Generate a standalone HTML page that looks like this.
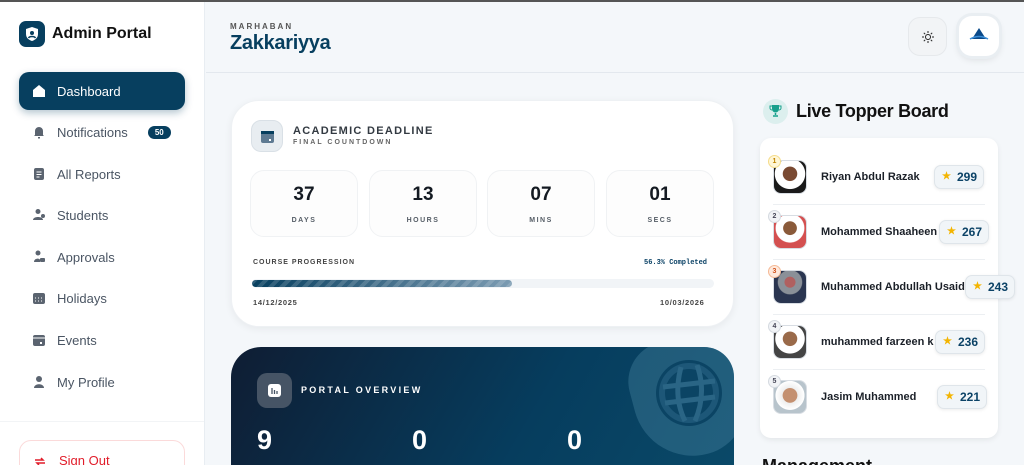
<!DOCTYPE html>
<html><head><meta charset="utf-8"><style>
*{box-sizing:border-box;margin:0;padding:0}
html,body{width:1024px;height:465px;overflow:hidden}
body{font-family:"Liberation Sans",sans-serif;background:#f4f7fa;position:relative}
.abs{position:absolute}
.top{left:0;top:0;width:1024px;height:2px;background:#555}
.side{left:0;top:2px;width:205px;height:463px;background:#fff;border-right:1px solid #e8edf2;overflow:hidden}
.nav{position:absolute;left:19px;width:166px;height:38px;display:flex;align-items:center;padding-left:38px;font-size:13px;color:#4a5563}
.nav svg{position:absolute;left:13px;top:12px}
.hdr{left:206px;top:2px;width:818px;height:71px;border-bottom:1px solid #e3e8ee}
.card{background:#fff;border-radius:28px;box-shadow:0 2px 8px rgba(0,0,0,.06);border:1px solid #eef1f4}
.cd{position:absolute;top:170px;width:108px;height:67px;border:1px solid #f0f2f4;border-radius:14px;background:#fdfdfd;text-align:center}
.cd b{display:block;font-size:19px;color:#141a22;margin-top:13px;font-weight:900}
.cd span{display:block;font-size:7px;letter-spacing:1.5px;color:#555d66;font-weight:bold;margin-top:11px}
.row{position:absolute;left:13px;width:212px;height:55px}
.av{position:absolute;left:0;top:10px;width:34px;height:34px;border-radius:8px;border:1px solid #d8dde3;overflow:hidden}
.rk{position:absolute;left:-5px;top:5px;width:13px;height:13px;border-radius:50%;font-size:7px;font-weight:bold;text-align:center;line-height:11px;background:#f1f3f6;border:1px solid #d5dae0;color:#445}
.nm{position:absolute;left:48px;top:21px;font-size:11px;font-weight:bold;color:#1b2028;white-space:nowrap}
.bd{position:absolute;top:15px;height:24px;width:50px;border-radius:7px;background:#f1f5f8;border:1px solid #dfe5ea;box-shadow:0 1px 3px rgba(0,0,0,.08);font-size:12px;font-weight:900;color:#0b4266;line-height:22px;padding-left:22px}
.bd:before{content:"★";position:absolute;left:7px;color:#f3b400;font-size:10px}
.sep{position:absolute;left:0;right:0;bottom:0;height:1px;background:#eceff2}
</style></head><body>
<div class="abs top"></div>
<div class="abs side">
 <div class="abs" style="left:19px;top:19px;width:26px;height:26px;border-radius:7px;background:#073f5f"><svg width="26" height="26" viewBox="0 0 26 26"><path d="M13 6l6 2v5c0 4-3 6-6 7c-3-1-6-3-6-7V8z" fill="#fff"/><circle cx="13" cy="12" r="2" fill="#073f5f"/><path d="M9.5 17c1-2 6-2 7 0" stroke="#073f5f" stroke-width="1.6" fill="none"/></svg></div>
 <div class="abs" style="left:52px;top:23px;font-size:16px;font-weight:bold;color:#111">Admin Portal</div>
 <div class="nav" style="top:70px;background:#073f5f;color:#fff;border-radius:10px;box-shadow:0 3px 8px rgba(7,63,95,.3)"><svg width="14" height="14"><path d="M1 6L7 1l6 5v7H1z" fill="#fff"/></svg>Dashboard</div>
 <div class="nav" style="top:111px"><svg width="14" height="14"><path d="M3 10V6a4 4 0 018 0v4l1 1H2z M6 12h2v1.5H6z" fill="#5b6470"/></svg>Notifications<span style="margin-left:20px;background:#073f5f;color:#fff;font-size:8px;font-weight:bold;border-radius:8px;padding:2px 7px">50</span></div>
 <div class="nav" style="top:153px"><svg width="14" height="14"><rect x="2" y="1" width="10" height="12" rx="2" fill="#5b6470"/><path d="M4.5 5h5M4.5 7.5h5M4.5 10h3" stroke="#fff" stroke-width="1"/></svg>All Reports</div>
 <div class="nav" style="top:194px"><svg width="14" height="14"><circle cx="6" cy="3.5" r="2.5" fill="#5b6470"/><path d="M1 12c0-4 10-4 10 0z" fill="#5b6470"/><circle cx="11" cy="8" r="2" fill="#5b6470"/></svg>Students</div>
 <div class="nav" style="top:236px"><svg width="14" height="14"><circle cx="6" cy="3" r="2.5" fill="#5b6470"/><path d="M2 12c0-4 6-4 6-2v2z" fill="#5b6470"/><rect x="8" y="8" width="5" height="4" rx="1" fill="#5b6470"/></svg>Approvals</div>
 <div class="nav" style="top:277px"><svg width="14" height="14"><rect x="1" y="2" width="12" height="11" rx="2" fill="#5b6470"/><path d="M3 7h1M6 7h1M9 7h1M3 10h1M6 10h1M9 10h1" stroke="#fff"/></svg>Holidays</div>
 <div class="nav" style="top:319px"><svg width="14" height="14"><rect x="1" y="2" width="12" height="11" rx="2" fill="#5b6470"/><path d="M1 5h12" stroke="#fff"/><rect x="8" y="9" width="2" height="2" fill="#fff"/></svg>Events</div>
 <div class="nav" style="top:361px"><svg width="14" height="14"><circle cx="7" cy="4" r="3" fill="#5b6470"/><path d="M2 13c0-5 10-5 10 0z" fill="#5b6470"/></svg>My Profile</div>
 <div class="abs" style="left:0;top:419px;width:204px;height:1px;background:#f2f4f6"></div>
 <div class="abs" style="left:19px;top:438px;width:166px;height:40px;border:1px solid #fbdada;border-radius:12px;color:#e11d2a;font-size:13px;padding:12px 0 0 39px"><svg class="abs" style="left:14px;top:15px" width="12" height="10"><path d="M1 4h8l-2-2M11 7H3l2 2" stroke="#e11d2a" stroke-width="1.5" fill="none"/></svg>Sign Out</div>
</div>
<div class="abs hdr">
 <div class="abs" style="left:24px;top:20px;font-size:8px;letter-spacing:2px;color:#555;font-weight:bold">MARHABAN</div>
 <div class="abs" style="left:24px;top:30px;font-size:20px;font-weight:900;color:#073f5f;letter-spacing:-.3px">Zakkariyya</div>
 <div class="abs" style="left:702px;top:15px;width:39px;height:39px;border-radius:12px;background:#f2f4f6;border:1px solid #e6e9ec"><svg class="abs" style="left:12px;top:12px" width="14" height="14"><circle cx="7" cy="7" r="2.5" stroke="#222" fill="none"/><path d="M7 1v2M7 11v2M1 7h2M11 7h2M2.8 2.8l1.4 1.4M9.8 9.8l1.4 1.4M2.8 11.2l1.4-1.4M9.8 4.2l1.4-1.4" stroke="#222"/></svg></div>
 <div class="abs" style="left:753px;top:14px;width:40px;height:40px;border-radius:13px;background:#fff;box-shadow:0 0 0 3px #e9eef2,0 3px 8px rgba(0,0,0,.12)"><svg class="abs" style="left:10px;top:11px" width="20" height="16"><path d="M10 1L3 12h14z" fill="#0a4a8a"/><path d="M1 12q9-5 18 0" stroke="#3b8ed8" stroke-width="1.5" fill="none"/></svg></div>
</div>
<div class="abs card" style="left:231px;top:100px;width:503px;height:227px">
 <div class="abs" style="left:19px;top:19px;width:32px;height:32px;border-radius:10px;background:#e8edf1;border:1px solid #d9e0e6"><svg class="abs" style="left:8px;top:8px" width="15" height="15"><rect x="1" y="2" width="13" height="12" rx="2" fill="#5e7a92"/><rect x="1" y="2" width="13" height="3" fill="#073f5f"/><rect x="9" y="10" width="2" height="2" fill="#fff"/></svg></div>
 <div class="abs" style="left:61px;top:24px;font-size:11px;font-weight:900;letter-spacing:1.3px;color:#333a42">ACADEMIC DEADLINE</div>
 <div class="abs" style="left:61px;top:38px;font-size:7px;font-weight:bold;letter-spacing:2px;color:#666">FINAL COUNTDOWN</div>
</div>
<div class="cd" style="left:250px"><b>37</b><span>DAYS</span></div>
<div class="cd" style="left:369px"><b>13</b><span>HOURS</span></div>
<div class="cd" style="left:487px"><b>07</b><span>MINS</span></div>
<div class="cd" style="left:606px"><b>01</b><span>SECS</span></div>
<div class="abs" style="left:253px;top:259px;font-size:7px;font-weight:bold;letter-spacing:1px;color:#444">COURSE PROGRESSION</div>
<div class="abs" style="left:644px;top:259px;font-size:7px;font-weight:bold;color:#0b4266;font-family:'Liberation Mono',monospace">56.3% Completed</div>
<div class="abs" style="left:252px;top:279px;width:462px;height:9px;border-radius:5px;background:#f1f4f7"></div>
<div class="abs" style="left:252px;top:280px;width:260px;height:7px;border-radius:4px;background:repeating-linear-gradient(135deg,rgba(255,255,255,.15) 0 4px,transparent 4px 8px),linear-gradient(90deg,#073f5f,#7b9bb2)"></div>
<div class="abs" style="left:253px;top:298px;font-size:7.5px;font-weight:bold;letter-spacing:.7px;color:#444">14/12/2025</div>
<div class="abs" style="left:660px;top:298px;font-size:7.5px;font-weight:bold;letter-spacing:.7px;color:#444">10/03/2026</div>
<div class="abs" style="left:231px;top:347px;width:503px;height:118px;border-radius:30px 30px 0 0;background:linear-gradient(120deg,#0f1d33,#063d5e 60%,#0a4968);overflow:hidden">
 <div class="abs" style="left:402px;top:-10px;width:110px;height:120px;border-radius:40px 20px 50px 60px;background:rgba(80,140,170,.35);transform:rotate(-15deg)"></div>
 <svg class="abs" style="left:420px;top:10px" width="80" height="80"><circle cx="38" cy="36" r="33" fill="#0b4464"/><circle cx="38" cy="36" r="27" stroke="#1f5a7a" stroke-width="6" fill="none" opacity=".9"/><path d="M12 30l52-6M14 46l50-6M30 10q-8 30 4 54M46 8q10 28-2 56" stroke="#2a6585" stroke-width="5" fill="none"/></svg>
 <div class="abs" style="left:26px;top:26px;width:35px;height:35px;border-radius:10px;background:#465465"><svg class="abs" style="left:10px;top:10px" width="15" height="15"><rect x="1" y="1" width="13" height="13" rx="3" fill="#fff"/><path d="M5 5v6M7.5 7v4M10 8v3" stroke="#465465" stroke-width="1.3"/></svg></div>
 <div class="abs" style="left:70px;top:38px;font-size:9px;font-weight:900;letter-spacing:2.3px;color:#fff">PORTAL OVERVIEW</div>
 <div class="abs" style="left:26px;top:78px;font-size:27px;font-weight:900;color:#fff">9</div>
 <div class="abs" style="left:181px;top:78px;font-size:27px;font-weight:900;color:#fff">0</div>
 <div class="abs" style="left:336px;top:78px;font-size:27px;font-weight:900;color:#fff">0</div>
</div>
<div class="abs" style="left:763px;top:99px;width:25px;height:25px;border-radius:50%;background:#dcefee"><svg class="abs" style="left:6px;top:5px" width="13" height="14"><path d="M3 1h7v4a3.5 3.5 0 01-7 0z" fill="#17a08c"/><path d="M6.5 9v2M4 12h5" stroke="#17a08c" stroke-width="1.5"/><path d="M3 2H1v2a2 2 0 002 2M10 2h2v2a2 2 0 01-2 2" stroke="#17a08c" fill="none"/></svg></div>
<div class="abs" style="left:796px;top:101px;font-size:18px;font-weight:900;color:#111;letter-spacing:-.3px">Live Topper Board</div>
<div class="abs" style="left:760px;top:138px;width:238px;height:300px;background:#fff;border-radius:11px;box-shadow:0 2px 6px rgba(0,0,0,.07)">
 <div class="row" style="top:12px"><div class="av" style="background:radial-gradient(circle at 50% 40%,#7a4a32 28%,#fff 30%,#fff 60%,#1a1a1a 62%)"></div><div class="rk" style="background:#fff6d6;border-color:#f5dc8a;color:#c08400">1</div><div class="nm">Riyan Abdul Razak</div><div class="bd" style="left:161px">299</div><div class="sep"></div></div>
 <div class="row" style="top:67px"><div class="av" style="background:radial-gradient(circle at 50% 38%,#8a5a3a 26%,#fff 28%,#fff 55%,#d45050 58%)"></div><div class="rk">2</div><div class="nm">Mohammed Shaaheen</div><div class="bd" style="left:166px">267</div><div class="sep"></div></div>
 <div class="row" style="top:122px"><div class="av" style="background:radial-gradient(circle at 50% 35%,#b06060 20%,#8a9098 22%,#8a9098 45%,#2a3550 48%)"></div><div class="rk" style="background:#ffe9dc;border-color:#f5b995;color:#d0501a">3</div><div class="nm">Muhammed Abdullah Usaid.</div><div class="bd" style="left:192px">243</div><div class="sep"></div></div>
 <div class="row" style="top:177px"><div class="av" style="background:radial-gradient(circle at 50% 40%,#9a6a4a 28%,#fff 30%,#fff 58%,#444 60%)"></div><div class="rk">4</div><div class="nm">muhammed farzeen k</div><div class="bd" style="left:162px">236</div><div class="sep"></div></div>
 <div class="row" style="top:232px"><div class="av" style="background:radial-gradient(circle at 50% 45%,#c49070 30%,#eee 32%,#fff 60%,#b8c4cc 62%)"></div><div class="rk">5</div><div class="nm">Jasim Muhammed</div><div class="bd" style="left:164px">221</div></div>
</div>
<div class="abs" style="left:762px;top:456px;font-size:18px;font-weight:900;color:#111">Management</div>
</body></html>
